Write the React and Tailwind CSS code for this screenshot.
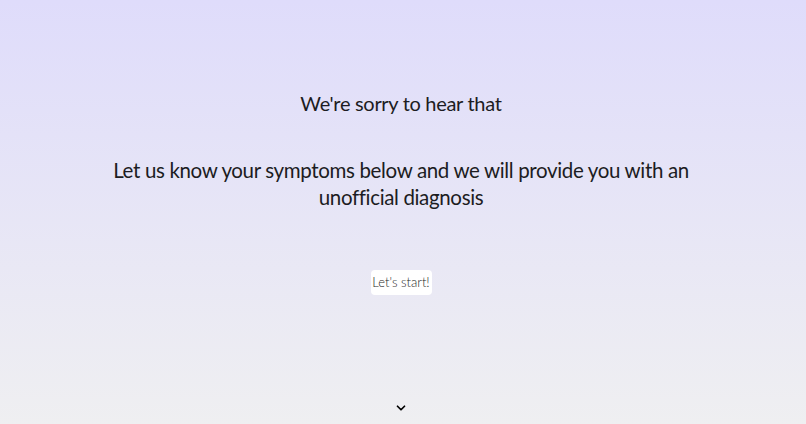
import { ChevronDown } from "lucide-react";

const App = () => {
  return (
    <div
      className="w-full h-[424px] pr-[4px] flex flex-col items-center bg-gradient-to-b from-[#dfdcfb] to-[#efeff1] text-[#1c1c22]"
      style={{ fontFamily: "Lato, 'Noto Sans', sans-serif" }}
    >
      <h1 className="mt-[88px] text-[20px] leading-[30px] tracking-[-0.3px]">We're sorry to hear that</h1>
      <p className="mt-[39px] w-[620px] text-center text-[20.5px] leading-[27px] tracking-[-0.35px]">
        Let us know your symptoms below and we will provide you with an unofficial diagnosis
      </p>
      <button className="mt-[59px] h-[25px] w-[61px] rounded-[4px] bg-white text-[13px] font-light text-[#1f1f1f]">
        Let's start!
      </button>
      <ChevronDown className="mt-[106px] w-[14px] h-[14px] text-black" strokeWidth={3} />
    </div>
  );
};

export default App;
